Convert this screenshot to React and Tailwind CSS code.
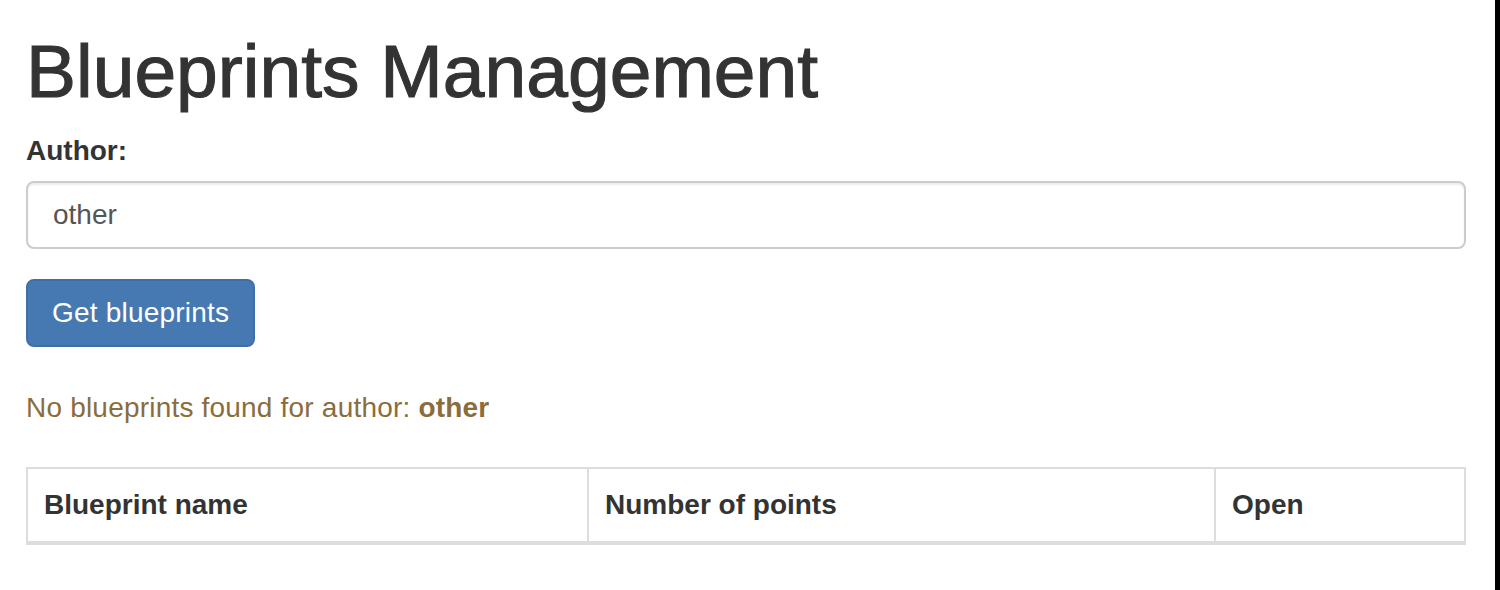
import React from "react";

const App = () => {
  return (
    <div className="flex min-h-[590px] w-full bg-white font-['Liberation_Sans',Arial,sans-serif] text-[#333]">
      <div className="flex-1 pl-[26px] pr-[29px] pt-[32px]">
        <h1 className="mb-[20px] text-[75px] leading-[79px] font-normal [-webkit-text-stroke:1.1px_#333]">
          Blueprints Management
        </h1>

        <div className="mb-[30px]">
          <label className="mb-[10px] inline-block text-[28px] leading-[40px] font-bold">
            Author:
          </label>
          <input
            type="text"
            defaultValue="other"
            className="block h-[68px] w-full rounded-[8px] border-2 border-[#ccc] bg-white px-[25px] text-[28px] text-[#555] shadow-[inset_0_2px_2px_rgba(0,0,0,0.075)] outline-none"
          />
        </div>

        <button className="h-[68px] rounded-[8px] border-2 border-[#3f6fa6] bg-[#4679b2] px-[24px] text-[28px] leading-[40px] tracking-[0.2px] text-white">
          Get blueprints
        </button>

        <p className="mt-[41px] mb-[39px] text-[28px] leading-[40px] tracking-[0.2px] text-[#8a6d3b]">
          No blueprints found for author: <strong className="font-bold">other</strong>
        </p>

        <table className="w-full table-fixed border-collapse border-2 border-[#ddd]">
          <colgroup>
            <col className="w-[561px]" />
            <col className="w-[627px]" />
            <col />
          </colgroup>
          <thead>
            <tr>
              <th className="border-2 border-b-4 border-[#ddd] p-[16px] text-left text-[28px] leading-[40px] font-bold">
                Blueprint name
              </th>
              <th className="border-2 border-b-4 border-[#ddd] p-[16px] text-left text-[28px] leading-[40px] font-bold">
                Number of points
              </th>
              <th className="border-2 border-b-4 border-[#ddd] p-[16px] text-left text-[28px] leading-[40px] font-bold">
                Open
              </th>
            </tr>
          </thead>
          <tbody></tbody>
        </table>
      </div>
      <div className="w-[5px] shrink-0 bg-black" />
    </div>
  );
};

export default App;
